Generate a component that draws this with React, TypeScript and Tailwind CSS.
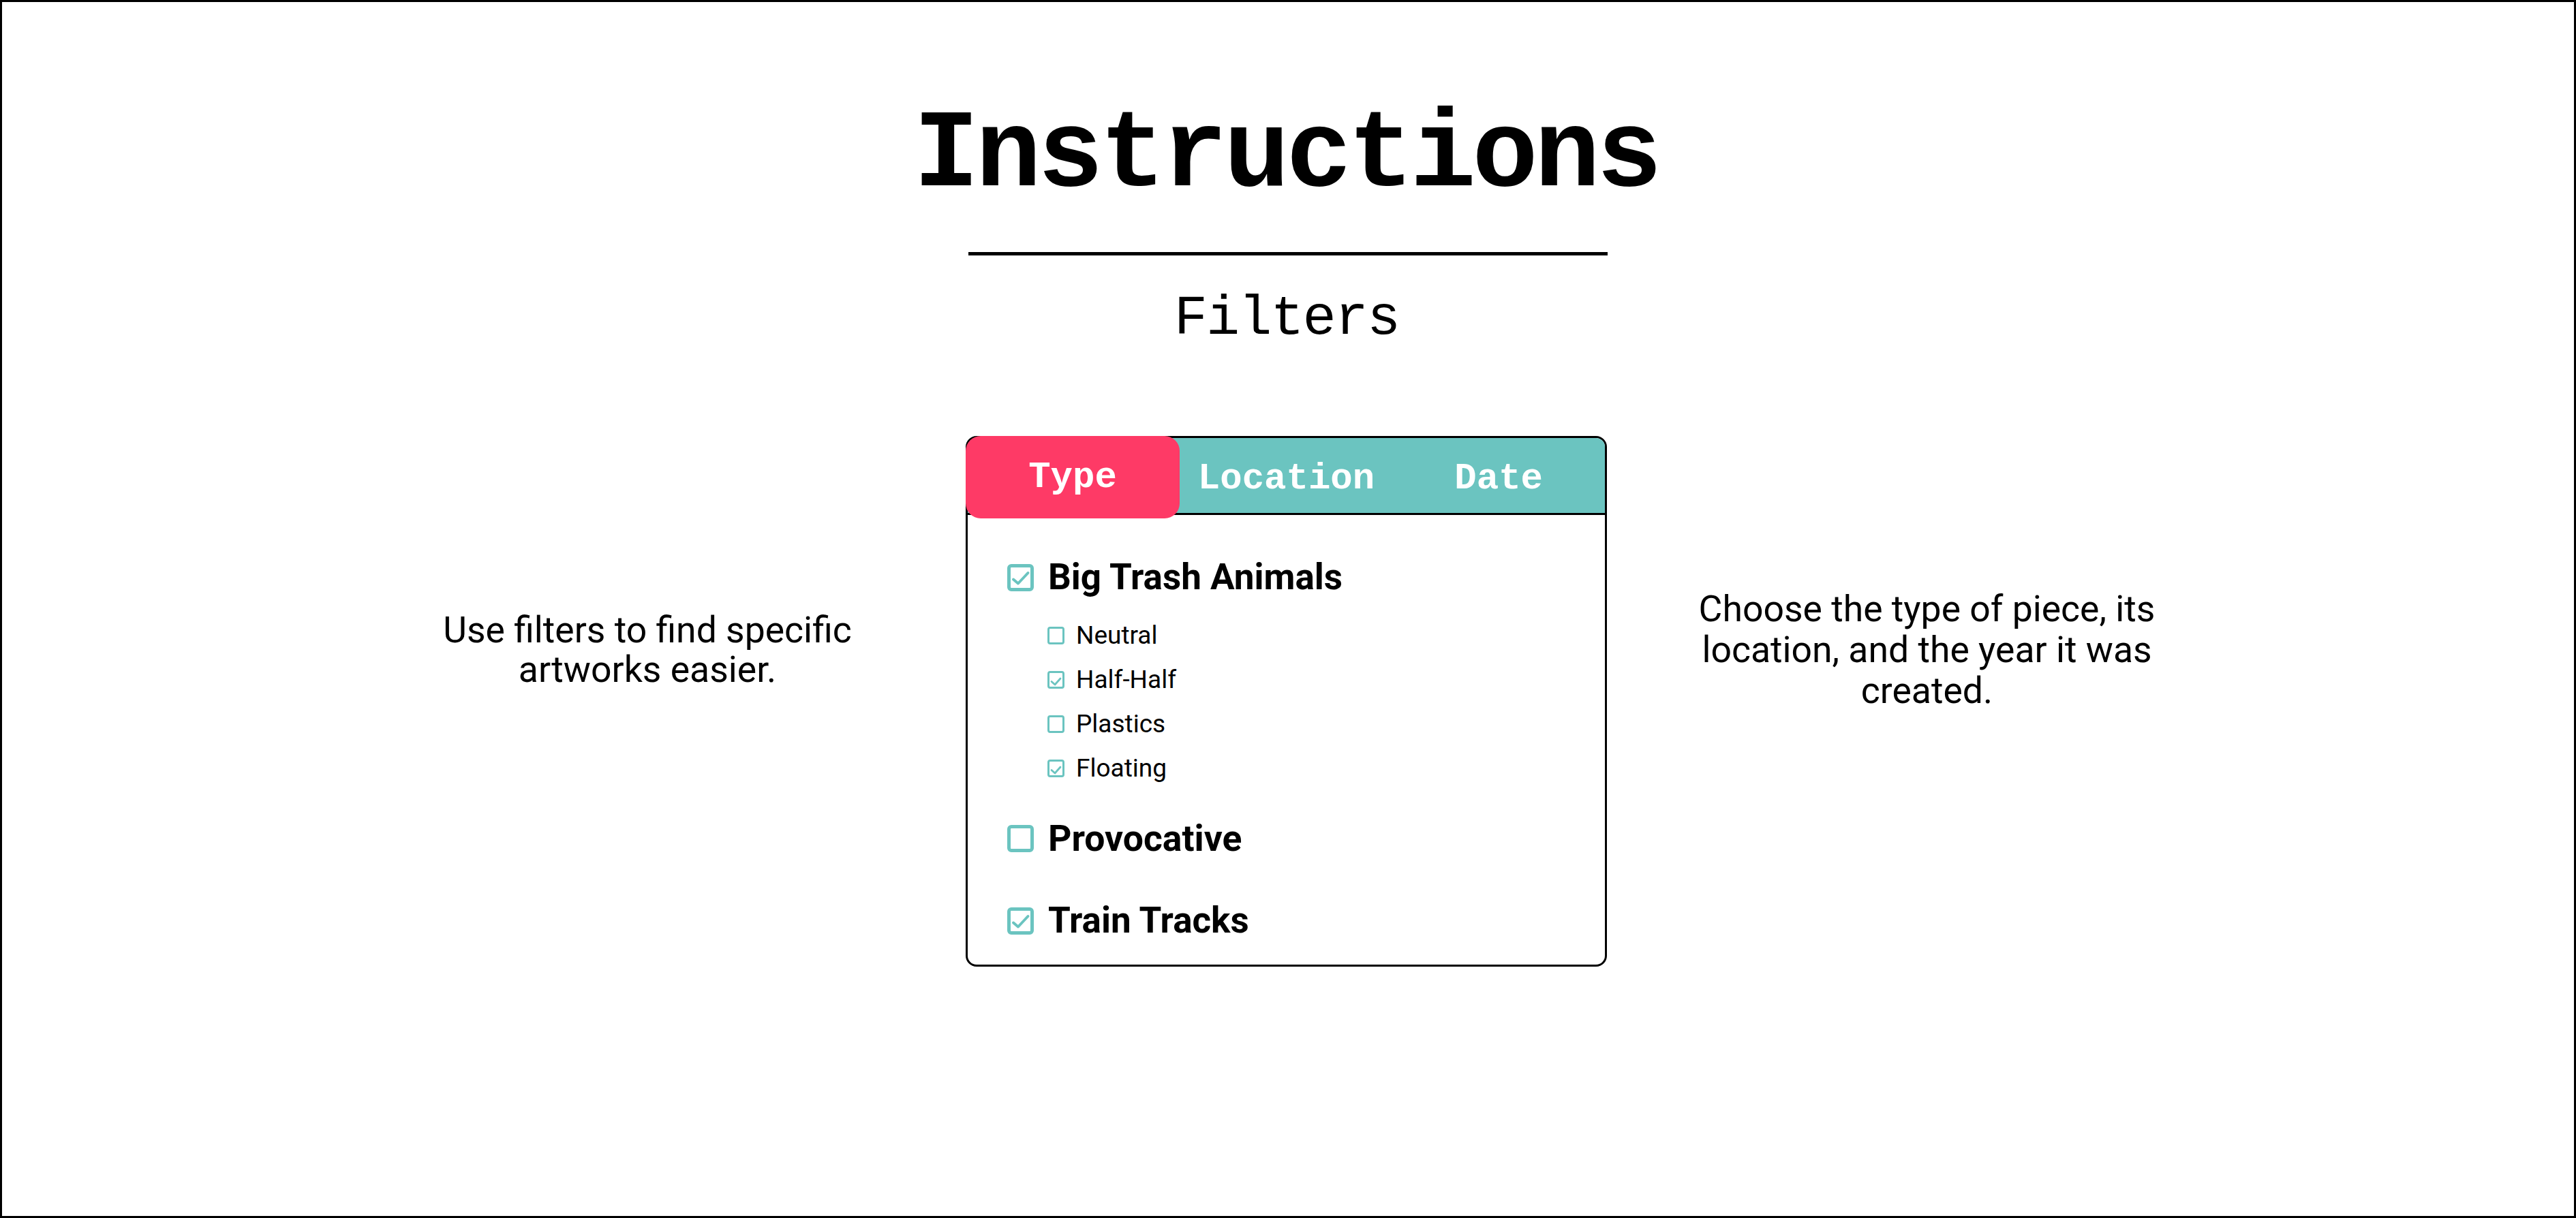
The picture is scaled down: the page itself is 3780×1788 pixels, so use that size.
const TEAL = '#6bc4c0';

function Box({ checked, big }: { checked: boolean; big?: boolean }) {
  if (big) {
    return (
      <div className="relative w-[39px] h-[40px] shrink-0 rounded-[6px] border-[5px] border-[#6bc4c0] bg-white">
        {checked && (
          <svg viewBox="0 0 39 40" className="absolute -inset-[5px] w-[39px] h-[40px]" fill="none" stroke={TEAL} strokeWidth="4" strokeLinecap="round" strokeLinejoin="round">
            <polyline points="9,22.5 16,28.5 30.5,13" />
          </svg>
        )}
      </div>
    );
  }
  return (
    <div className="relative w-[25px] h-[26px] shrink-0 rounded-[4px] border-[3px] border-[#6bc4c0] bg-white">
      {checked && (
        <svg viewBox="0 0 25 26" className="absolute -inset-[3px] w-[25px] h-[26px]" fill="none" stroke={TEAL} strokeWidth="2.8" strokeLinecap="round" strokeLinejoin="round">
          <polyline points="6,15.5 11,20 19,11" />
        </svg>
      )}
    </div>
  );
}

const subItems = [
  { label: 'Neutral', checked: false },
  { label: 'Half-Half', checked: true },
  { label: 'Plastics', checked: false },
  { label: 'Floating', checked: true },
];

export default function App() {
  return (
    <div className="w-[3780px] h-[1788px] bg-white border-[3px] border-black text-black flex flex-col items-center">
      <h1 className="mt-[146px] pr-[6px] text-[161px] leading-[161px] tracking-[-5.5px] font-bold font-['Liberation_Mono',monospace]">Instructions</h1>
      <div className="mt-[60px] w-[938px] h-[5px] bg-black" />
      <h2 className="mt-[53px] pr-[4px] text-[82px] leading-[82px] tracking-[-2px] font-['Liberation_Mono',monospace]">Filters</h2>

      <div className="mt-[130px] flex items-start gap-[97px] font-['Roboto',sans-serif]">
        <div className="w-[740px] h-[628px] flex items-center justify-center">
          <p className="text-center text-[53.5px] leading-[58px]">Use filters to find specific artworks easier.</p>
        </div>

        <div className="relative w-[941px] rounded-[16px] border-[3px] border-black bg-white">
          <div className="grid grid-cols-3 h-[113px] rounded-t-[13px] border-b-[3px] border-black bg-[#6bc4c0] font-['Liberation_Mono',monospace] font-bold text-[54px] text-white">
            <div className="relative z-10 -ml-[3px] -mt-[3px] w-[314px] h-[121px] rounded-[22px] bg-[#fe3a66] flex items-center justify-center">
              Type
            </div>
            <div className="flex items-center justify-center">Location</div>
            <div className="flex items-center justify-center">Date</div>
          </div>

          <div className="pl-[58px] pt-[62px] pb-[34px]">
            <div className="h-[60px] flex items-center gap-[21px]">
              <Box checked big />
              <span className="text-[53px] font-bold">Big Trash Animals</span>
            </div>

            <div className="mt-[22px] pl-[59px] flex flex-col">
              {subItems.map((s) => (
                <div key={s.label} className="h-[65px] flex items-center gap-[17px]">
                  <Box checked={s.checked} />
                  <span className="text-[37px]">{s.label}</span>
                </div>
              ))}
            </div>

            <div className="mt-[41px] h-[60px] flex items-center gap-[21px]">
              <Box checked={false} big />
              <span className="text-[53.5px] font-bold">Provocative</span>
            </div>

            <div className="mt-[61px] h-[60px] flex items-center gap-[21px]">
              <Box checked big />
              <span className="text-[53px] font-bold">Train Tracks</span>
            </div>
          </div>
        </div>

        <div className="w-[745px] h-[628px] flex items-center justify-center">
          <p className="text-center text-[53.5px] leading-[60px]">Choose the type of piece, its location, and the year it was created.</p>
        </div>
      </div>
    </div>
  );
}
